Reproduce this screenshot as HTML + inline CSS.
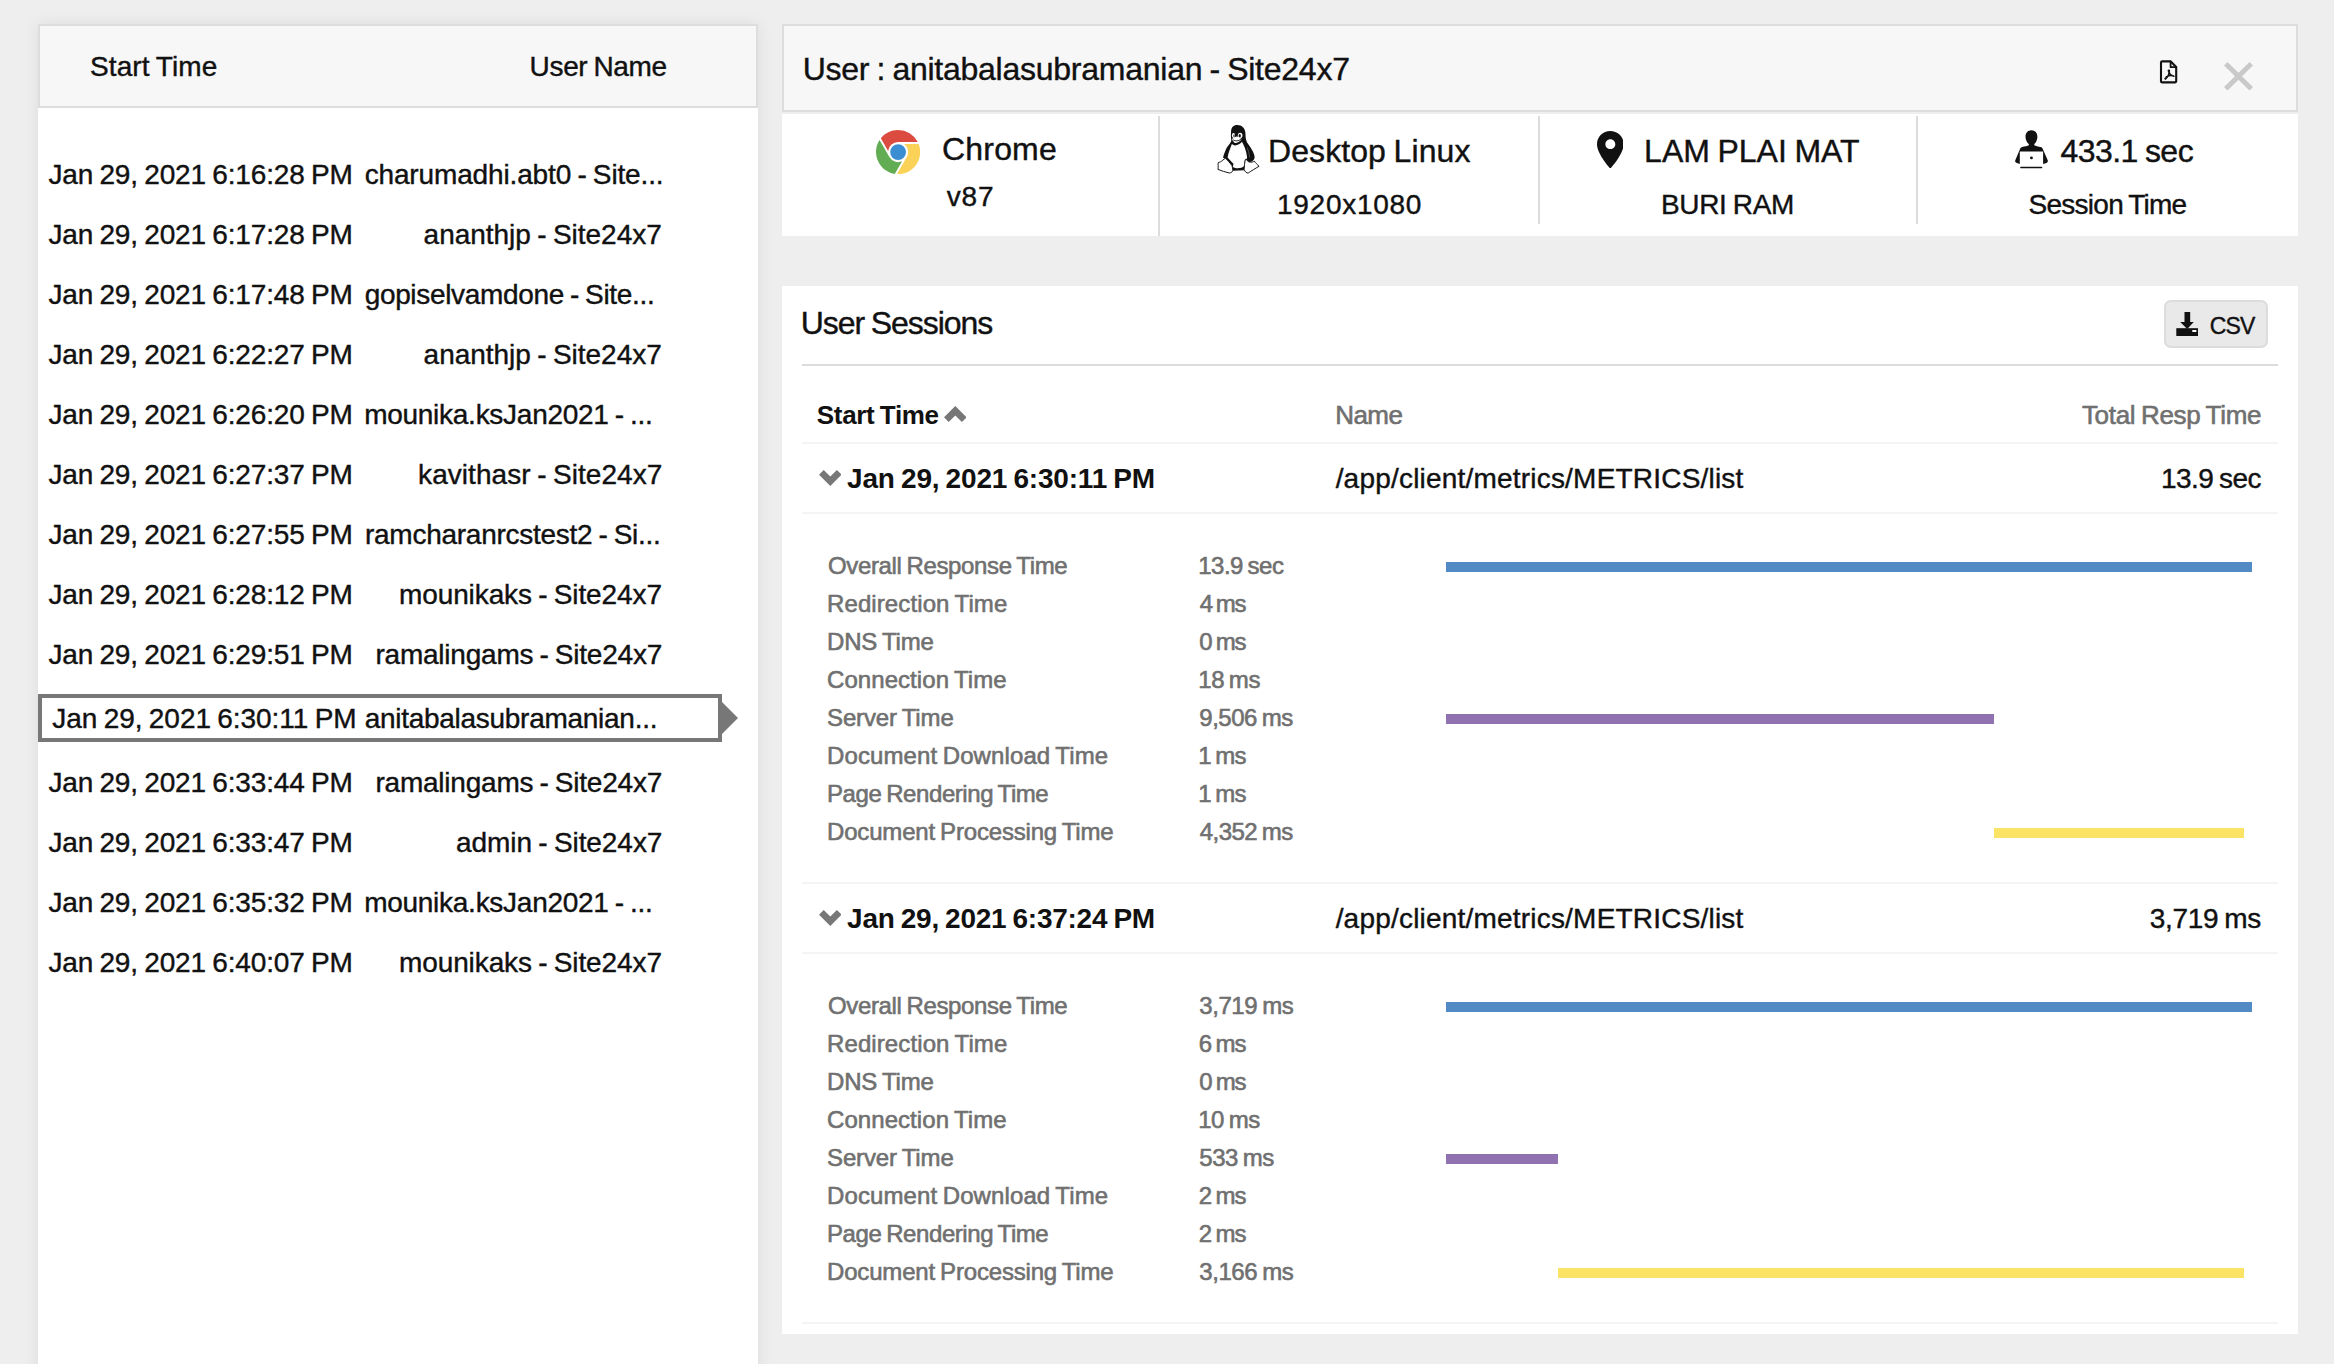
<!DOCTYPE html><html lang="en"><head><meta charset="utf-8"><title>User Sessions</title><style>
html,body{margin:0;padding:0}
body{width:2334px;height:1364px;overflow:hidden;background:#eeeeee;position:relative;font-family:"Liberation Sans",sans-serif;word-spacing:-0.085em}
.abs,svg{position:absolute}
.panel-l{left:38px;top:24px;width:720px;height:1400px;background:#fff;box-shadow:0 0 15px rgba(0,0,0,.075)}
.hdr{background:#f7f7f7;border:2px solid #dddddd;box-sizing:border-box}
.sel{left:38px;top:694px;width:684px;height:48px;border:4px solid #777;box-sizing:border-box;background:#fff}
.sel-arrow{left:722px;top:702px;width:0;height:0;border-left:16px solid #777;border-top:16px solid transparent;border-bottom:16px solid transparent}
.panel-r{left:782px;top:24px;width:1516px;height:212px}
.info{left:782px;top:114px;width:1516px;height:122px;background:#fff}
.vsep{width:2px;background:#dcdcdc;top:116px}
.card{left:782px;top:286px;width:1516px;height:1048px;background:#fff}
.hr{left:802px;width:1476px;height:2px}
.btn{left:2164px;top:300px;width:104px;height:48px;box-sizing:border-box;background:#e9e9e9;border:2px solid #dcdcdc;border-radius:7px}
.bar{height:10px}
.b{background:#518ac5}.p{background:#9172b0}.y{background:#fbe365}
.t{position:absolute;white-space:pre;display:block;color:#111;-webkit-text-stroke:.4px #111}.s23{font-size:23px;line-height:23px}.s24{font-size:24px;line-height:24px}.s26{font-size:26px;line-height:26px}.s28{font-size:28px;line-height:28px}.s32{font-size:32px;line-height:32px}.g{color:#707070;-webkit-text-stroke:.6px #707070}.bd{font-weight:700;-webkit-text-stroke:0}
</style></head><body>
<section id="session-list">
<div class="abs panel-l"></div>
<div class="abs hdr" style="left:38px;top:24px;width:720px;height:84px"></div>
<div class="abs sel"></div><div class="abs sel-arrow"></div>
<span class="t s28" style="left:90.00px;top:53px;letter-spacing:0.111px">Start Time</span>
<span class="t s28" style="left:529.60px;top:53px;letter-spacing:-0.344px">User Name</span>
<span class="t s28" style="left:48.45px;top:161px;letter-spacing:-0.141px">Jan 29, 2021 6:16:28 PM</span>
<span class="t s28" style="left:364.65px;top:161px;letter-spacing:-0.140px">charumadhi.abt0 - Site...</span>
<span class="t s28" style="left:48.45px;top:221px;letter-spacing:-0.141px">Jan 29, 2021 6:17:28 PM</span>
<span class="t s28" style="left:423.60px;top:221px;letter-spacing:-0.022px">ananthjp - Site24x7</span>
<span class="t s28" style="left:48.45px;top:281px;letter-spacing:-0.141px">Jan 29, 2021 6:17:48 PM</span>
<span class="t s28" style="left:364.65px;top:281px;letter-spacing:-0.330px">gopiselvamdone - Site...</span>
<span class="t s28" style="left:48.45px;top:341px;letter-spacing:-0.141px">Jan 29, 2021 6:22:27 PM</span>
<span class="t s28" style="left:423.60px;top:341px;letter-spacing:-0.022px">ananthjp - Site24x7</span>
<span class="t s28" style="left:48.45px;top:401px;letter-spacing:-0.141px">Jan 29, 2021 6:26:20 PM</span>
<span class="t s28" style="left:364.15px;top:401px;letter-spacing:-0.266px">mounika.ksJan2021 - ...</span>
<span class="t s28" style="left:48.45px;top:461px;letter-spacing:-0.141px">Jan 29, 2021 6:27:37 PM</span>
<span class="t s28" style="left:418.10px;top:461px;letter-spacing:0.058px">kavithasr - Site24x7</span>
<span class="t s28" style="left:48.45px;top:521px;letter-spacing:-0.141px">Jan 29, 2021 6:27:55 PM</span>
<span class="t s28" style="left:365.00px;top:521px;letter-spacing:-0.267px">ramcharanrcstest2 - Si...</span>
<span class="t s28" style="left:48.45px;top:581px;letter-spacing:-0.141px">Jan 29, 2021 6:28:12 PM</span>
<span class="t s28" style="left:399.00px;top:581px;letter-spacing:-0.105px">mounikaks - Site24x7</span>
<span class="t s28" style="left:48.45px;top:641px;letter-spacing:-0.141px">Jan 29, 2021 6:29:51 PM</span>
<span class="t s28" style="left:375.45px;top:641px;letter-spacing:-0.217px">ramalingams - Site24x7</span>
<span class="t s28" style="left:52.35px;top:705px;letter-spacing:-0.050px">Jan 29, 2021 6:30:11 PM</span>
<span class="t s28" style="left:364.65px;top:705px;letter-spacing:-0.277px">anitabalasubramanian...</span>
<span class="t s28" style="left:48.45px;top:769px;letter-spacing:-0.141px">Jan 29, 2021 6:33:44 PM</span>
<span class="t s28" style="left:375.45px;top:769px;letter-spacing:-0.217px">ramalingams - Site24x7</span>
<span class="t s28" style="left:48.45px;top:829px;letter-spacing:-0.141px">Jan 29, 2021 6:33:47 PM</span>
<span class="t s28" style="left:456.00px;top:829px;letter-spacing:-0.067px">admin - Site24x7</span>
<span class="t s28" style="left:48.45px;top:889px;letter-spacing:-0.141px">Jan 29, 2021 6:35:32 PM</span>
<span class="t s28" style="left:364.15px;top:889px;letter-spacing:-0.266px">mounika.ksJan2021 - ...</span>
<span class="t s28" style="left:48.45px;top:949px;letter-spacing:-0.141px">Jan 29, 2021 6:40:07 PM</span>
<span class="t s28" style="left:399.00px;top:949px;letter-spacing:-0.105px">mounikaks - Site24x7</span>
</section>
<section id="user-summary">
<div class="abs panel-r"></div>
<div class="abs hdr" style="left:782px;top:24px;width:1516px;height:88px"></div>
<div class="abs info"></div>
<div class="abs vsep" style="left:1158px;height:120px"></div>
<div class="abs vsep" style="left:1538px;height:108px"></div>
<div class="abs vsep" style="left:1916px;height:108px"></div>
<svg style="left:2159px;top:59px" width="20" height="26" viewBox="0 0 20 26"><g fill="none" stroke="#111" stroke-width="2.1" stroke-linejoin="round" stroke-linecap="round"><path d="M3.2 2.4h8.6l5.4 5.6v14.2a1.2 1.2 0 0 1-1.2 1.2H3.2A1.2 1.2 0 0 1 2 22.2V3.6a1.2 1.2 0 0 1 1.2-1.2z"/><path d="M11.6 2.6v5.6h5.4" stroke-width="1.8"/><path d="M9.9 12.2c.4 2.6-.6 5.6-3.6 7.6M9.9 12.2c.3 2.6 1.8 4.4 5 5.1M7.2 17.9c2.2-1.2 4.4-1.6 6.6-1.2" stroke-width="1.5"/></g><circle cx="9.9" cy="11.8" r="1.3" fill="#111"/><circle cx="6.5" cy="19.6" r="1.1" fill="#111"/></svg>
<svg style="left:2224px;top:61.8px" width="29" height="28.6" viewBox="0 0 29 28.6"><path d="M3.5 0L14.5 10.8 25.5 0 29 3.5 18 14.300 29 25.100 25.500 28.600 14.500 17.800 3.500 28.600 0 25.100 11 14.300 0 3.500z" fill="#c9c9c9"/></svg>
<svg style="left:875.9px;top:129.8px" width="44.2" height="44.2" viewBox="0 0 24 24"><path fill="#dc4b3f" d="M12 0C8.21 0 4.831 1.757 2.632 4.501l3.953 6.848A5.454 5.454 0 0 1 12 6.545h10.691A12 12 0 0 0 12 0z"/><path fill="#62ad53" d="M1.931 5.47A11.943 11.943 0 0 0 0 12c0 6.012 4.42 10.991 10.189 11.864l3.953-6.847a5.45 5.45 0 0 1-6.865-2.29z"/><path fill="#f9d257" d="M15.273 7.636a5.446 5.446 0 0 1 1.45 7.09l.002.001h-.002l-5.344 9.257c.206.01.413.016.621.016 6.627 0 12-5.373 12-12 0-1.54-.29-3.011-.818-4.364z"/><circle cx="12" cy="12" r="4.3" fill="#3b8ed2"/></svg>
<svg style="left:1200px;top:115px" width="80" height="70" viewBox="0 0 1559 1364"><path fill="#111" d="M725 195C820 195 878 262 884 342C890 420 884 468 918 536C960 602 1040 690 1062 800C1076 872 1012 922 960 915C926 910 910 882 900 860L880 872L862 1078L640 1088L618 1000C580 950 520 882 470 838L448 832C468 762 498 682 520 640C558 580 600 540 610 500C600 440 600 380 605 320C610 240 650 195 725 195Z"/><path fill="#fff" d="M622 566C648 590 680 600 704 588C744 576 794 552 818 520C852 580 900 680 914 800L918 850C900 855 880 862 876 882L858 992C820 1040 702 1052 642 1012L652 950C612 905 570 860 538 826C545 760 580 680 625 556Z"/><path fill="#fff" stroke="#111" stroke-width="19" stroke-linejoin="round" d="M442 880C422 910 382 920 356 926C346 960 362 1000 350 1060C420 1090 500 1112 570 1130C612 1130 640 1100 640 1076C634 1040 634 1008 622 984C582 934 532 872 496 842Z"/><path fill="#fff" stroke="#111" stroke-width="19" stroke-linejoin="round" d="M882 872C872 930 860 1000 860 1062C880 1110 910 1136 940 1130C1000 1090 1080 1040 1150 1000C1120 960 1072 930 1060 900C1040 912 1000 926 960 916C930 906 912 882 902 862Z"/><ellipse cx="652" cy="400" rx="30" ry="48" fill="#fff"/><ellipse cx="782" cy="400" rx="45" ry="53" fill="#fff"/><ellipse cx="662" cy="404" rx="12" ry="26" fill="#111"/><ellipse cx="774" cy="404" rx="22" ry="36" fill="#111"/><path fill="#fff" d="M624 466C660 440 690 420 720 420C750 420 790 450 806 470C800 500 760 536 702 548C672 548 642 516 624 466Z"/><path fill="none" stroke="#111" stroke-width="17" stroke-linecap="round" d="M650 488C690 518 750 508 792 478"/><path fill="none" stroke="#999" stroke-width="8" stroke-linecap="round" d="M922 640C945 700 960 760 966 822"/></svg>
<svg style="left:1596.6px;top:130.7px" width="26.7" height="37.6" viewBox="5 2 14 20" preserveAspectRatio="none"><path fill="#111" d="M12 2C8.130 2 5 5.130 5 9c0 5.250 7 13 7 13s7-7.750 7-13c0-3.870-3.130-7-7-7zm0 9.600c-1.440 0-2.600-1.160-2.600-2.600s1.160-2.600 2.600-2.600 2.600 1.160 2.600 2.600-1.160 2.600-2.600 2.600z"/></svg>
<svg style="left:2000px;top:120px" width="60" height="60" viewBox="0 0 1364 1364"><path fill="#111" d="M715 235C800 235 850 300 850 385C850 460 810 520 780 545L780 575C800 595 880 605 925 615C950 622 965 640 975 665L1085 915C1095 945 1080 965 1060 975L980 1000L980 715L450 715L450 1000L370 970C345 958 338 940 348 915L455 660C465 635 480 622 505 615C560 600 630 590 655 575L655 545C620 520 580 460 580 385C580 300 630 235 715 235Z"/><circle cx="715" cy="862" r="33" fill="#111"/><rect x="458" y="1064" width="504" height="32" rx="16" fill="#111"/></svg>
<span class="t s32" style="left:802.65px;top:53px;letter-spacing:-0.253px">User : anitabalasubramanian - Site24x7</span>
<span class="t s32" style="left:942.10px;top:133px;letter-spacing:0.160px">Chrome</span>
<span class="t s28" style="left:946.85px;top:183px;letter-spacing:0.775px">v87</span>
<span class="t s32" style="left:1268.00px;top:135px;letter-spacing:0.083px">Desktop Linux</span>
<span class="t s28" style="left:1277.00px;top:191px;letter-spacing:0.725px">1920x1080</span>
<span class="t s32" style="left:1644.10px;top:135px;letter-spacing:0.009px">LAM PLAI MAT</span>
<span class="t s28" style="left:1660.90px;top:191px;letter-spacing:-0.300px">BURI RAM</span>
<span class="t s32" style="left:2060.40px;top:135px;letter-spacing:-0.519px">433.1 sec</span>
<span class="t s28" style="left:2028.55px;top:191px;letter-spacing:-0.741px">Session Time</span>
</section>
<section id="user-sessions">
<div class="abs card"></div>
<div class="abs btn"></div>
<svg style="left:2175.6px;top:311.9px" width="22.4" height="24.2" viewBox="0 0 22.4 24.2"><path fill="#111" d="M8.500 0h5.700v10.100h3.600l-6.600 6.900-7-6.900h4.300z"/><path fill="#111" d="M.3 16.200h22.100v7.800H.3z"/><rect x="16.300" y="18" width="4.100" height="2" fill="#fff"/></svg>
<div class="abs hr" style="top:364px;background:#dcdcdc"></div>
<div class="abs hr" style="top:442px;background:#f4f4f4"></div>
<div class="abs hr" style="top:512px;background:#f4f4f4"></div>
<div class="abs hr" style="top:882px;background:#f4f4f4"></div>
<div class="abs hr" style="top:952px;background:#f4f4f4"></div>
<div class="abs hr" style="top:1322px;background:#f4f4f4"></div>
<svg style="left:943.800px;top:406.300px" width="22.600" height="16" viewBox="0 0 22.600 16"><path fill="#777" d="M11.300 0L22.600 11.300 17.900 16 11.300 9.400 4.700 16 0 11.300z"/></svg>
<svg style="left:818.900px;top:470px" width="22.600" height="16" viewBox="0 0 22.600 16"><path fill="#777" d="M11.300 16L22.600 4.700 17.900 0 11.300 6.600 4.700 0 0 4.700z"/></svg>
<svg style="left:818.900px;top:910px" width="22.600" height="16" viewBox="0 0 22.600 16"><path fill="#777" d="M11.300 16L22.600 4.700 17.900 0 11.300 6.600 4.700 0 0 4.700z"/></svg>
<div class="abs bar b" style="left:1446px;top:562px;width:806px"></div>
<div class="abs bar p" style="left:1446px;top:714px;width:548px"></div>
<div class="abs bar y" style="left:1994px;top:828px;width:250px"></div>
<div class="abs bar b" style="left:1446px;top:1002px;width:806px"></div>
<div class="abs bar p" style="left:1446px;top:1154px;width:112px"></div>
<div class="abs bar y" style="left:1558px;top:1268px;width:686px"></div>
<span class="t s32" style="left:800.80px;top:307px;letter-spacing:-1.042px">User Sessions</span>
<span class="t s23" style="left:2209.80px;top:315px;letter-spacing:-0.900px">CSV</span>
<span class="t s26 bd" style="left:816.85px;top:402px;letter-spacing:-0.350px">Start Time</span>
<span class="t s26 g" style="left:1335.15px;top:402px;letter-spacing:-0.517px">Name</span>
<span class="t s26 g" style="left:2081.90px;top:402px;letter-spacing:-0.293px">Total Resp Time</span>
<span class="t s28 bd" style="left:847.10px;top:465px;letter-spacing:-0.186px">Jan 29, 2021 6:30:11 PM</span>
<span class="t s28" style="left:1335.65px;top:465px;letter-spacing:0.202px">/app/client/metrics/METRICS/list</span>
<span class="t s28" style="left:2161.00px;top:465px;letter-spacing:-0.571px">13.9 sec</span>
<span class="t s24 g" style="left:828.00px;top:554px;letter-spacing:-0.355px">Overall Response Time</span>
<span class="t s24 g" style="left:1198.25px;top:554px;letter-spacing:-0.529px">13.9 sec</span>
<span class="t s24 g" style="left:827.00px;top:592px;letter-spacing:0.103px">Redirection Time</span>
<span class="t s24 g" style="left:1199.75px;top:592px;letter-spacing:-1.283px">4 ms</span>
<span class="t s24 g" style="left:827.00px;top:630px;letter-spacing:-0.157px">DNS Time</span>
<span class="t s24 g" style="left:1199.25px;top:630px;letter-spacing:-1.117px">0 ms</span>
<span class="t s24 g" style="left:827.00px;top:668px;letter-spacing:0.064px">Connection Time</span>
<span class="t s24 g" style="left:1198.25px;top:668px;letter-spacing:-0.462px">18 ms</span>
<span class="t s24 g" style="left:827.00px;top:706px;letter-spacing:-0.120px">Server Time</span>
<span class="t s24 g" style="left:1199.25px;top:706px;letter-spacing:-0.471px">9,506 ms</span>
<span class="t s24 g" style="left:827.00px;top:744px;letter-spacing:0.112px">Document Download Time</span>
<span class="t s24 g" style="left:1198.25px;top:744px;letter-spacing:-0.783px">1 ms</span>
<span class="t s24 g" style="left:827.00px;top:782px;letter-spacing:-0.428px">Page Rendering Time</span>
<span class="t s24 g" style="left:1198.25px;top:782px;letter-spacing:-0.783px">1 ms</span>
<span class="t s24 g" style="left:827.00px;top:820px;letter-spacing:-0.178px">Document Processing Time</span>
<span class="t s24 g" style="left:1199.75px;top:820px;letter-spacing:-0.543px">4,352 ms</span>
<span class="t s28 bd" style="left:847.10px;top:905px;letter-spacing:-0.255px">Jan 29, 2021 6:37:24 PM</span>
<span class="t s28" style="left:1335.65px;top:905px;letter-spacing:0.202px">/app/client/metrics/METRICS/list</span>
<span class="t s28" style="left:2149.75px;top:905px;letter-spacing:-0.321px">3,719 ms</span>
<span class="t s24 g" style="left:828.00px;top:994px;letter-spacing:-0.355px">Overall Response Time</span>
<span class="t s24 g" style="left:1199.25px;top:994px;letter-spacing:-0.414px">3,719 ms</span>
<span class="t s24 g" style="left:827.00px;top:1032px;letter-spacing:0.103px">Redirection Time</span>
<span class="t s24 g" style="left:1198.75px;top:1032px;letter-spacing:-0.933px">6 ms</span>
<span class="t s24 g" style="left:827.00px;top:1070px;letter-spacing:-0.157px">DNS Time</span>
<span class="t s24 g" style="left:1199.25px;top:1070px;letter-spacing:-1.100px">0 ms</span>
<span class="t s24 g" style="left:827.00px;top:1108px;letter-spacing:0.064px">Connection Time</span>
<span class="t s24 g" style="left:1198.25px;top:1108px;letter-spacing:-0.475px">10 ms</span>
<span class="t s24 g" style="left:827.00px;top:1146px;letter-spacing:-0.120px">Server Time</span>
<span class="t s24 g" style="left:1199.25px;top:1146px;letter-spacing:-0.460px">533 ms</span>
<span class="t s24 g" style="left:827.00px;top:1184px;letter-spacing:0.112px">Document Download Time</span>
<span class="t s24 g" style="left:1198.75px;top:1184px;letter-spacing:-0.933px">2 ms</span>
<span class="t s24 g" style="left:827.00px;top:1222px;letter-spacing:-0.428px">Page Rendering Time</span>
<span class="t s24 g" style="left:1198.75px;top:1222px;letter-spacing:-0.933px">2 ms</span>
<span class="t s24 g" style="left:827.00px;top:1260px;letter-spacing:-0.178px">Document Processing Time</span>
<span class="t s24 g" style="left:1199.25px;top:1260px;letter-spacing:-0.414px">3,166 ms</span>
</section>
</body></html>
